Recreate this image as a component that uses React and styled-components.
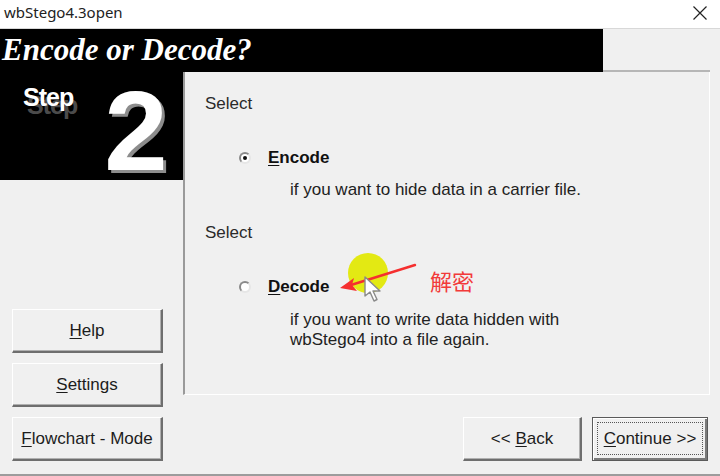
import React from "react";
import styled, { createGlobalStyle } from "styled-components";

const GlobalStyle = createGlobalStyle`
  html, body {
    margin: 0;
    padding: 0;
    background: #f0f0f0;
  }
  * {
    box-sizing: border-box;
  }
`;

const App = () => {
  return (
    <Window>
      <GlobalStyle />
      <TitleBar>
        <TitleText>wbStego4.3open</TitleText>
        <CloseIcon width="16" height="16" viewBox="0 0 16 16">
          <path d="M1.5 1.5 L14.5 14.5 M14.5 1.5 L1.5 14.5" stroke="#222" strokeWidth="1.2" />
        </CloseIcon>
      </TitleBar>

      <HeaderRow>
        <HeaderBlack>Encode or Decode?</HeaderBlack>
        <HeaderRest />
      </HeaderRow>

      <Main>
        <LeftCol>
          <StepBox>
            <StepWord>Step</StepWord>
            <StepNumber>2</StepNumber>
          </StepBox>
          <SideButtons>
            <WinButton $width={151}>
              <span><u>H</u>elp</span>
            </WinButton>
            <WinButton $width={151}>
              <span><u>S</u>ettings</span>
            </WinButton>
            <WinButton $width={151}>
              <span><u>F</u>lowchart - Mode</span>
            </WinButton>
          </SideButtons>
        </LeftCol>

        <RightCol>
          <Panel>
            <Prompt>Select</Prompt>
            <OptionRow $gap={34}>
              <Radio $checked />
              <OptionLabel>
                <u>E</u>ncode
              </OptionLabel>
            </OptionRow>
            <Description $gap={12}>if you want to hide data in a carrier file.</Description>

            <Prompt $gap={23}>Select</Prompt>
            <OptionRow $gap={34}>
              <Radio />
              <OptionLabel>
                <u>D</u>ecode
              </OptionLabel>
            </OptionRow>
            <Description $gap={13}>
              if you want to write data hidden with
              <br />
              wbStego4 into a file again.
            </Description>

            <Highlight />
            <Arrow width="80" height="30" viewBox="0 0 80 30">
              <path d="M78 2 L14 22" stroke="#f52f2f" strokeWidth="2.4" strokeLinecap="round" />
              <path d="M3 25 L17 15 L15 22 L20 28 Z" fill="#f52f2f" />
            </Arrow>
            <Cursor width="24" height="30" viewBox="0 0 24 30">
              <path
                d="M3 2 L3 21 L8 17 L12 26 L15 24.5 L11 16 L18 16 Z"
                fill="#fff"
                stroke="#8a8a8a"
                strokeWidth="1.4"
                strokeLinejoin="round"
              />
            </Cursor>
            <Note>解密</Note>
          </Panel>

          <Footer>
            <WinButton $width={119}>
              <span>&lt;&lt; <u>B</u>ack</span>
            </WinButton>
            <WinButton $width={116} $default>
              <FocusRing>
                <span><u>C</u>ontinue &gt;&gt;</span>
              </FocusRing>
            </WinButton>
          </Footer>
        </RightCol>
      </Main>
    </Window>
  );
};

const Window = styled.div`
  width: 720px;
  height: 476px;
  display: flex;
  flex-direction: column;
  background: #f0f0f0;
  border-bottom: 2px solid #9c9c9c;
  overflow: hidden;
  font-family: "Liberation Sans", Arial, sans-serif;
  color: #1a1a1a;
`;

const TitleBar = styled.div`
  height: 29px;
  flex: 0 0 29px;
  background: #ffffff;
  display: flex;
  align-items: center;
  justify-content: space-between;
  padding: 0 12px 0 4px;
  border-bottom: 1px solid #d8d8d8;
`;

const TitleText = styled.span`
  font-family: "Noto Sans", "Open Sans", sans-serif;
  font-size: 15px;
  color: #222;
  margin-top: -4px;
`;

const CloseIcon = styled.svg`
  margin-top: -2px;
`;

const HeaderRow = styled.div`
  display: flex;
  height: 43px;
  flex: 0 0 43px;
`;

const HeaderBlack = styled.div`
  width: 603px;
  background: #000;
  color: #fff;
  font-family: "Liberation Serif", "Times New Roman", serif;
  font-style: italic;
  font-weight: 700;
  font-size: 31px;
  line-height: 1;
  padding: 5px 0 0 2px;
  white-space: nowrap;
`;

const HeaderRest = styled.div`
  width: 107px;
  border-bottom: 2px solid #b6b6b6;
`;

const Main = styled.div`
  display: flex;
  flex: 1;
`;

const LeftCol = styled.div`
  width: 183px;
  display: flex;
  flex-direction: column;
`;

const StepBox = styled.div`
  height: 108px;
  background: #000;
  display: flex;
  align-items: flex-start;
  padding-left: 23px;
`;

const StepWord = styled.div`
  color: #fff;
  font-weight: 700;
  font-size: 25px;
  letter-spacing: -1px;
  line-height: 1;
  margin-top: 13px;
  text-shadow: 4px 8px 0 rgba(110, 110, 110, 0.7);
`;

const StepNumber = styled.div`
  color: #fff;
  font-weight: 700;
  font-size: 114px;
  line-height: 1;
  margin: 2px 0 0 31px;
  text-shadow: 3px 3px 0 #8c8c8c;
`;

const SideButtons = styled.div`
  display: flex;
  flex-direction: column;
  gap: 10px;
  padding: 129px 0 0 12px;
`;

const WinButton = styled.div`
  width: ${(p) => p.$width}px;
  height: 44px;
  display: flex;
  align-items: center;
  justify-content: center;
  font-size: 17px;
  color: #1c1c1c;
  background: #f0f0f0;
  white-space: pre;
  border-style: solid;
  border-width: ${(p) => (p.$default ? "1px" : "1px 2px 2px 1px")};
  border-color: ${(p) =>
    p.$default ? "#5a5a5a" : "#ffffff #6e6e6e #6e6e6e #ffffff"};
  box-shadow: ${(p) =>
    p.$default
      ? "inset 1px 1px 0 #fff, inset -2px -2px 0 #7a7a7a"
      : "inset -1px -1px 0 #b0b0b0"};
  padding: ${(p) => (p.$default ? "4px 4px 5px 4px" : "0")};

  u {
    text-decoration-thickness: 1px;
    text-underline-offset: 2px;
  }
`;

const FocusRing = styled.span`
  flex: 1;
  align-self: stretch;
  display: flex;
  align-items: center;
  justify-content: center;
  border: 1px dotted #555;
`;

const RightCol = styled.div`
  width: 527px;
  display: flex;
  flex-direction: column;
`;

const Panel = styled.div`
  position: relative;
  height: 323px;
  border-left: 2px solid #9a9a9a;
  border-right: 1px solid #ffffff;
  border-bottom: 1px solid #ffffff;
  padding: 22px 0 0 20px;
  font-size: 17px;
  line-height: 20px;
`;

const Prompt = styled.div`
  color: #2a2a2a;
  margin-top: ${(p) => p.$gap || 0}px;
`;

const OptionRow = styled.div`
  display: flex;
  align-items: center;
  margin-top: ${(p) => p.$gap}px;
  padding-left: 34px;
  gap: 17px;
`;

const Radio = styled.span`
  width: 12px;
  height: 12px;
  border-radius: 50%;
  background: #fff;
  border: 2px solid;
  border-color: #8a8a8a #e6e6e6 #e6e6e6 #8a8a8a;
  display: flex;
  align-items: center;
  justify-content: center;

  &::after {
    content: "";
    width: 4px;
    height: 4px;
    border-radius: 50%;
    background: ${(p) => (p.$checked ? "#111" : "transparent")};
  }
`;

const OptionLabel = styled.span`
  font-weight: 700;
  color: #111;

  u {
    text-decoration-thickness: 1px;
    text-underline-offset: 2px;
  }
`;

const Description = styled.div`
  margin-top: ${(p) => p.$gap}px;
  padding-left: 85px;
  color: #222;
`;

const Highlight = styled.div`
  position: absolute;
  left: 163px;
  top: 181px;
  width: 40px;
  height: 40px;
  border-radius: 50%;
  background: rgba(226, 232, 0, 0.92);
  filter: blur(0.6px);
`;

const Arrow = styled.svg`
  position: absolute;
  left: 152px;
  top: 191px;
`;

const Cursor = styled.svg`
  position: absolute;
  left: 177px;
  top: 203px;
`;

const Note = styled.div`
  position: absolute;
  left: 245px;
  top: 195px;
  font-family: "Noto Sans CJK SC", sans-serif;
  font-size: 22px;
  line-height: 26px;
  color: #f23a3a;
`;

const Footer = styled.div`
  display: flex;
  justify-content: flex-end;
  gap: 10px;
  margin-top: 22px;
  padding-right: 2px;
`;

export default App;
